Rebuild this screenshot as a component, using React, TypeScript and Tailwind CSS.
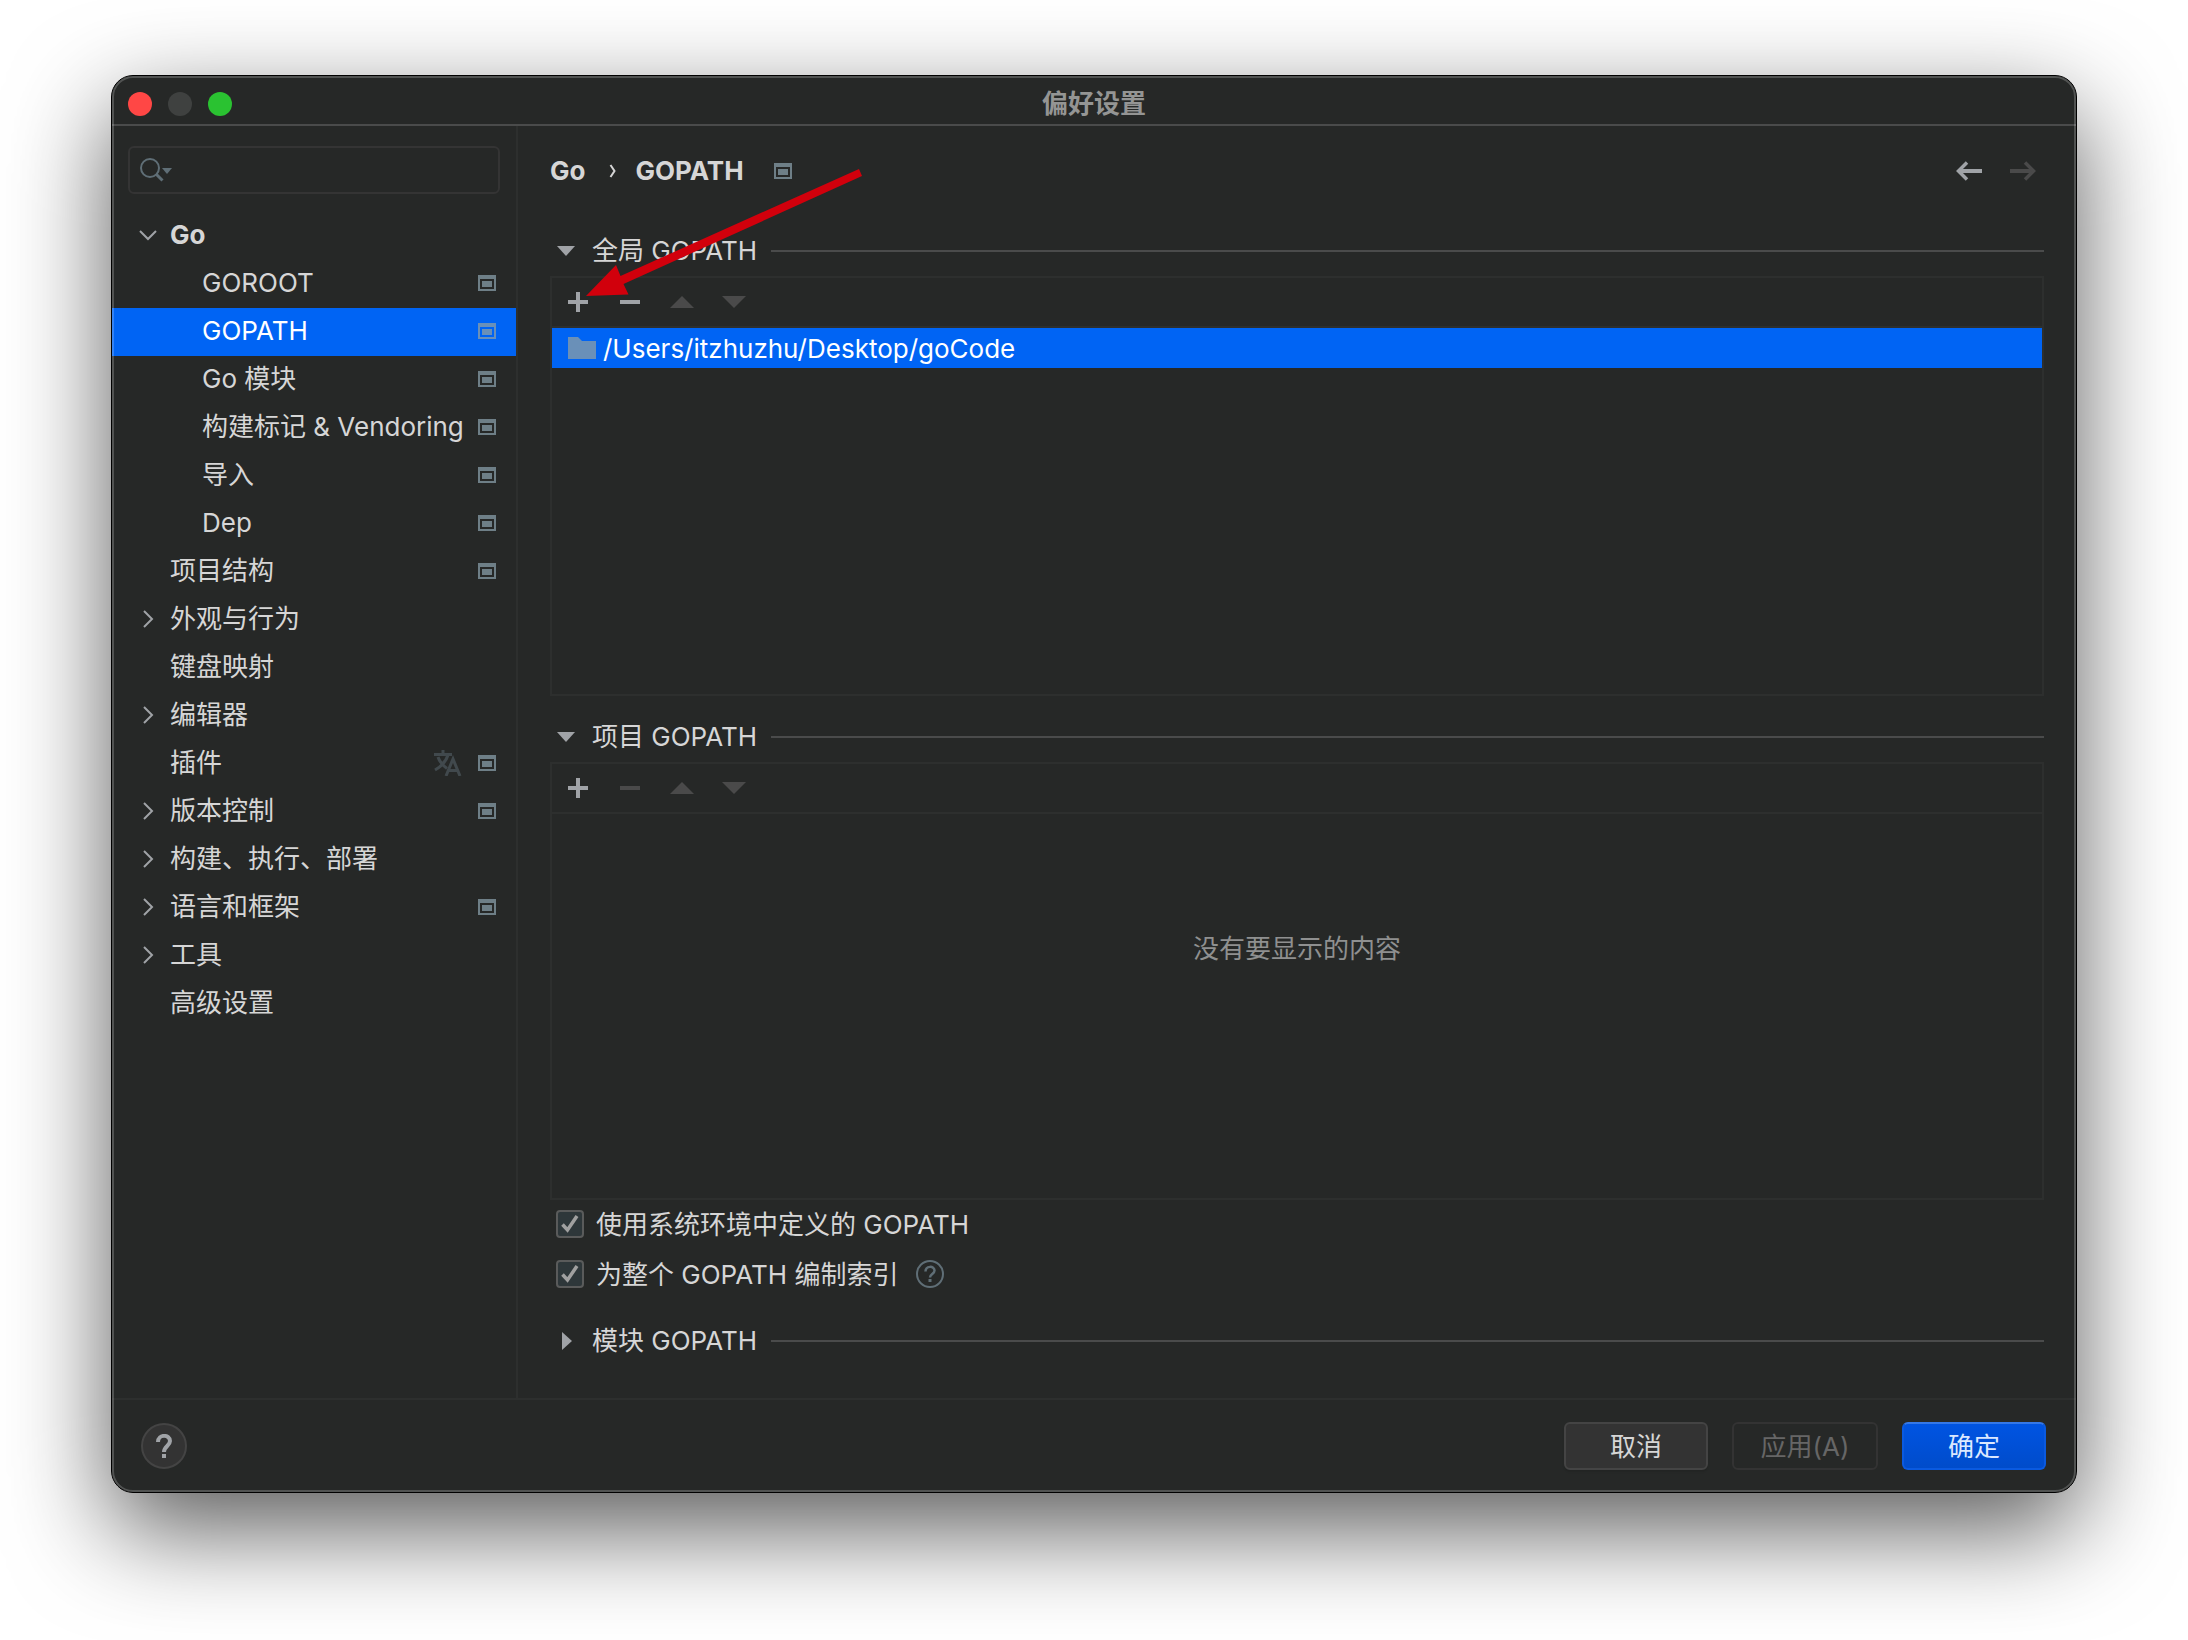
import React, { useState } from 'react';
import clsx from 'clsx';

interface TreeItem {
  label: string;
  depth?: number;
  arrow?: 'down' | 'right';
  project?: boolean;
  translate?: boolean;
  bold?: boolean;
}

const treeItems: TreeItem[] = [
  { label: 'Go', arrow: 'down', bold: true },
  { label: 'GOROOT', depth: 1, project: true },
  { label: 'GOPATH', depth: 1, project: true },
  { label: 'Go 模块', depth: 1, project: true },
  { label: '构建标记 & Vendoring', depth: 1, project: true },
  { label: '导入', depth: 1, project: true },
  { label: 'Dep', depth: 1, project: true },
  { label: '项目结构', project: true },
  { label: '外观与行为', arrow: 'right' },
  { label: '键盘映射' },
  { label: '编辑器', arrow: 'right' },
  { label: '插件', project: true, translate: true },
  { label: '版本控制', arrow: 'right', project: true },
  { label: '构建、执行、部署', arrow: 'right' },
  { label: '语言和框架', arrow: 'right', project: true },
  { label: '工具', arrow: 'right' },
  { label: '高级设置' },
];

const ProjectIcon: React.FC<{ selected?: boolean }> = ({ selected }) => (
  <svg
    width="18"
    height="16"
    viewBox="0 0 18 16"
    className={clsx('shrink-0', selected ? 'text-[#6a90b8]' : 'text-[#6e7f87]')}
    fill="currentColor"
    aria-hidden="true"
  >
    <path fillRule="evenodd" d="M0 0h18v16H0zM2 4v10h14V4z" />
    <path d="M4 6h10v6H4z" />
  </svg>
);

const TranslateIcon = () => (
  <svg width="28" height="26" viewBox="0 0 28 26" className="shrink-0 text-[#41494d]" fill="none" stroke="currentColor" aria-hidden="true">
    <path d="M0 4.500h18M9 0v4" strokeWidth="3" />
    <path d="M4 7c1.500 5 5 8.500 9 11.500M14 5C12 12 7 16.500 1 20" strokeWidth="3" />
    <path d="M12 26l7-17 7 17M14.500 20.500h9" strokeWidth="3" />
  </svg>
);

const TreeArrow: React.FC<{ direction?: 'down' | 'right' }> = ({ direction }) => (
  <span className="flex w-8 shrink-0 justify-center">
    {direction === 'down' && (
      <svg width="18" height="12" viewBox="0 0 18 12" fill="none" stroke="#a0a3a7" strokeWidth="2" aria-hidden="true">
        <path d="M1 2l8 8 8-8" />
      </svg>
    )}
    {direction === 'right' && (
      <svg width="12" height="18" viewBox="0 0 12 18" fill="none" stroke="#a0a3a7" strokeWidth="2" aria-hidden="true">
        <path d="M2 1l8 8-8 8" />
      </svg>
    )}
  </span>
);

const Sidebar: React.FC = () => {
  const [active, setActive] = useState('GOPATH');

  return (
    <aside className="w-[406px] shrink-0 border-r-2 border-[#2d2f2e] pt-5">
      <div className="mx-4 flex h-12 items-center rounded-md border-2 border-[#343434] pl-[10px]">
        <svg width="34" height="24" viewBox="0 0 34 24" className="shrink-0" fill="none" aria-hidden="true">
          <circle cx="10" cy="10" r="9" stroke="#5f6e76" strokeWidth="2" />
          <path d="M16.500 16.500l6 6" stroke="#5f6e76" strokeWidth="3" />
          <path d="M22 10h10l-5 6z" fill="#5f6e76" />
        </svg>
        <input type="text" aria-label="搜索" className="min-w-0 flex-1 bg-transparent px-2 text-[#d6d6d6] outline-none" />
      </div>
      <ul className="mt-[18px]">
        {treeItems.map((item) => {
          const selected = item.label === active;
          return (
            <li key={item.label}>
              <button
                type="button"
                onClick={() => setActive(item.label)}
                className={clsx(
                  'flex h-12 w-full items-center pr-5 pb-[3px] text-left whitespace-nowrap',
                  item.depth ? 'pl-[52px]' : 'pl-5',
                  item.bold && 'font-bold',
                  selected ? 'bg-[#0064f4] text-white' : 'text-[#d6d6d6]'
                )}
              >
                <TreeArrow direction={item.arrow} />
                <span className="flex-1 pl-[6px]">{item.label}</span>
                <span className="flex items-center gap-4">
                  {item.translate && <TranslateIcon />}
                  {item.project && <ProjectIcon selected={selected} />}
                </span>
              </button>
            </li>
          );
        })}
      </ul>
    </aside>
  );
};

const SectionHeader: React.FC<{ title: string; collapsed?: boolean }> = ({ title, collapsed }) => (
  <div className="flex h-[50px] shrink-0 items-center gap-[14px]">
    <button type="button" aria-expanded={!collapsed} className="flex items-center text-[#d6d6d6]">
      <span className="flex w-[42px] pl-[7px]">
        {collapsed ? (
          <svg width="18" height="18" viewBox="0 0 18 18" fill="#a0a3a7" aria-hidden="true">
            <path d="M5 0l10 9-10 9z" />
          </svg>
        ) : (
          <svg width="18" height="10" viewBox="0 0 18 10" fill="#a0a3a7" aria-hidden="true">
            <path d="M0 0h18l-9 10z" />
          </svg>
        )}
      </span>
      {title}
    </button>
    <div className="h-[2px] flex-1 bg-[#4a4b4b]" />
  </div>
);

const Toolbar: React.FC<{ canRemove?: boolean }> = ({ canRemove }) => (
  <div className="flex h-[50px] shrink-0 items-center gap-7 border-b-2 border-[#2d2f2e] px-[14px]">
    <button type="button" aria-label="添加" className="text-[#a0a3a7]">
      <svg width="24" height="24" viewBox="0 0 24 24" fill="currentColor">
        <path d="M10 2h4v8h8v4h-8v8h-4v-8H2v-4h8z" />
      </svg>
    </button>
    <button type="button" aria-label="移除" disabled={!canRemove} className="text-[#a0a3a7] disabled:text-[#4a4a4a]">
      <svg width="24" height="24" viewBox="0 0 24 24" fill="currentColor">
        <path d="M2 10h20v4H2z" />
      </svg>
    </button>
    <button type="button" aria-label="上移" disabled className="text-[#4a4a4a]">
      <svg width="24" height="24" viewBox="0 0 24 24" fill="currentColor">
        <path d="M0 18L12 6l12 12z" />
      </svg>
    </button>
    <button type="button" aria-label="下移" disabled className="text-[#4a4a4a]">
      <svg width="24" height="24" viewBox="0 0 24 24" fill="currentColor">
        <path d="M0 6h24L12 18z" />
      </svg>
    </button>
  </div>
);

const CheckOption: React.FC<{ id: string; label: string; children?: React.ReactNode }> = ({ id, label, children }) => (
  <div className="flex h-12 items-center pl-[6px]">
    <span className="relative flex">
      <input
        id={id}
        type="checkbox"
        defaultChecked
        className="peer size-7 appearance-none rounded-[4px] border-2 border-[#5a5b5b] bg-[#2e373a]"
      />
      <svg
        width="28"
        height="28"
        viewBox="0 0 28 28"
        fill="none"
        className="pointer-events-none absolute inset-0 hidden peer-checked:block"
        aria-hidden="true"
      >
        <path d="M6.500 14.500l5 5.500L21 6" stroke="#a0a0a0" strokeWidth="3.500" />
      </svg>
    </span>
    <label htmlFor={id} className="pt-[2px] pl-3">{label}</label>
    {children}
  </div>
);

const GoPathSettings: React.FC = () => (
  <main className="flex min-w-0 flex-1 flex-col px-8 pb-8">
    <header className="flex h-[90px] shrink-0 items-center font-bold">
      <span>Go</span>
      <svg width="8" height="14" viewBox="0 0 8 14" fill="none" className="mr-[18px] ml-6" aria-hidden="true">
        <path d="M1.500 1l4 6-4 6" stroke="#d6d6d6" strokeWidth="2" />
      </svg>
      <h1>GOPATH</h1>
      <span className="flex-1 pl-[30px]">
        <ProjectIcon />
      </span>
      <div className="flex gap-7 pr-2">
        <button type="button" aria-label="后退" className="text-[#a0a3a7]">
          <svg width="26" height="20" viewBox="0 0 26 20" fill="none" stroke="currentColor">
            <path d="M26 10H3" strokeWidth="4" />
            <path d="M11 1.500L2.500 10l8.500 8.500" strokeWidth="3.500" />
          </svg>
        </button>
        <button type="button" aria-label="前进" disabled className="text-[#4a4a4a]">
          <svg width="26" height="20" viewBox="0 0 26 20" fill="none" stroke="currentColor">
            <path d="M0 10h23" strokeWidth="4" />
            <path d="M15 1.500l8.500 8.500-8.500 8.500" strokeWidth="3.500" />
          </svg>
        </button>
      </div>
    </header>

    <section className="mt-[10px] flex flex-[470_1_0px] flex-col">
      <SectionHeader title="全局 GOPATH" />
      <div className="flex flex-1 flex-col border-2 border-[#2d2f2e]">
        <Toolbar canRemove />
        <ul>
          <li className="flex h-10 items-center gap-[7px] bg-[#0064f4] pl-4 text-white">
            <svg width="28" height="22" viewBox="0 0 28 22" fill="#6a90b8" aria-hidden="true">
              <path d="M0 0h10l4 4h14v18H0z" />
            </svg>
            <span className="pt-[2px]">/Users/itzhuzhu/Desktop/goCode</span>
          </li>
        </ul>
      </div>
    </section>

    <section className="mt-4 flex flex-[488_1_0px] flex-col">
      <SectionHeader title="项目 GOPATH" />
      <div className="flex flex-1 flex-col border-2 border-[#2d2f2e]">
        <Toolbar />
        <div className="flex flex-1 justify-center pt-[117px] text-[#8f9090]">没有要显示的内容</div>
      </div>
    </section>

    <div className="flex flex-col gap-[2px]">
      <CheckOption id="use-system-gopath" label="使用系统环境中定义的 GOPATH" />
      <CheckOption id="index-gopath" label="为整个 GOPATH 编制索引">
        <button type="button" aria-label="帮助" className="ml-[18px]">
          <svg width="28" height="28" viewBox="0 0 28 28" fill="none" stroke="#5f6e76" aria-hidden="true">
            <circle cx="14" cy="14" r="13" strokeWidth="2" />
            <path d="M9.500 11.500c0-6 9-6 9-1 0 3.500-4.500 3.500-4.500 7" strokeWidth="2.500" />
            <path d="M14 19v3" strokeWidth="3" />
          </svg>
        </button>
      </CheckOption>
    </div>

    <section className="mt-[18px]">
      <SectionHeader title="模块 GOPATH" collapsed />
    </section>
  </main>
);

const Footer: React.FC = () => (
  <footer className="flex h-[94px] shrink-0 items-center gap-6 border-t-2 border-[#2d2f2e] pr-[30px] pl-[29px]">
    <button
      type="button"
      aria-label="帮助"
      className="mr-auto flex size-[46px] items-center justify-center rounded-full border-2 border-[#444] bg-[#333] text-[#a0a3a7]"
    >
      <svg width="16" height="24" viewBox="0 0 16 24" fill="none" stroke="currentColor" aria-hidden="true">
        <path d="M2 8c0-8 12-8 12-1 0 5-6 5-6 11" strokeWidth="4" />
        <path d="M8 20v4" strokeWidth="4" />
      </svg>
    </button>
    <button type="button" className="h-12 w-36 rounded-md border-2 border-[#444] bg-[#333] pt-[2px] shadow-[0_2px_2px_rgba(0,0,0,0.1)]">
      取消
    </button>
    <button type="button" disabled className="h-12 w-[146px] rounded-md border-2 border-[#333] pt-[2px] text-[#666]">
      应用(A)
    </button>
    <button
      type="button"
      className="h-12 w-36 rounded-md border-2 border-[#0a5ae0] border-t-[#3478e8] bg-linear-to-b from-[#0054e2] to-[#004ccb] pt-[2px] text-[#dbe8ff]"
    >
      确定
    </button>
  </footer>
);

const App: React.FC = () => {
  return (
    <div className="flex min-h-screen flex-col overflow-hidden bg-white px-[111px] pt-[75px] pb-[147px] font-['Inter','Noto_Sans_CJK_SC',sans-serif] text-[26px] leading-9 text-[#d6d6d6]">
      <div className="relative flex flex-1 flex-col rounded-[22px] shadow-[0_36px_100px_rgba(0,0,0,0.65)]">
        <div className="flex flex-1 flex-col overflow-hidden rounded-[22px] border border-black bg-[#262827]">
          <div className="relative flex h-[50px] shrink-0 items-center justify-center border-b-2 border-[#4a4b4b] pt-2">
            <div className="absolute left-4 flex gap-4">
              <button type="button" aria-label="关闭" className="size-6 rounded-full bg-[#ff4745]" />
              <button type="button" aria-label="最小化" disabled className="size-6 rounded-full bg-[#3f4140]" />
              <button type="button" aria-label="缩放" className="size-6 rounded-full bg-[#2ac231]" />
            </div>
            <span className="font-bold text-[#949594]">偏好设置</span>
          </div>
          <div className="flex flex-1">
            <Sidebar />
            <GoPathSettings />
          </div>
          <Footer />
        </div>
        {/* light rim just inside the window frame */}
        <div className="pointer-events-none absolute inset-px rounded-[21px] border-2 border-white/20" />
        {/* pointer to the add button */}
        <svg
          width="280"
          height="132"
          viewBox="0 0 280 132"
          className="pointer-events-none absolute top-[91px] left-[473px]"
          fill="#d1000c"
          aria-hidden="true"
        >
          <path d="M2 130L32 99l4.500 11L275 3l3 7L39.500 118l5 10.500z" />
        </svg>
      </div>
    </div>
  );
};

export default App;
